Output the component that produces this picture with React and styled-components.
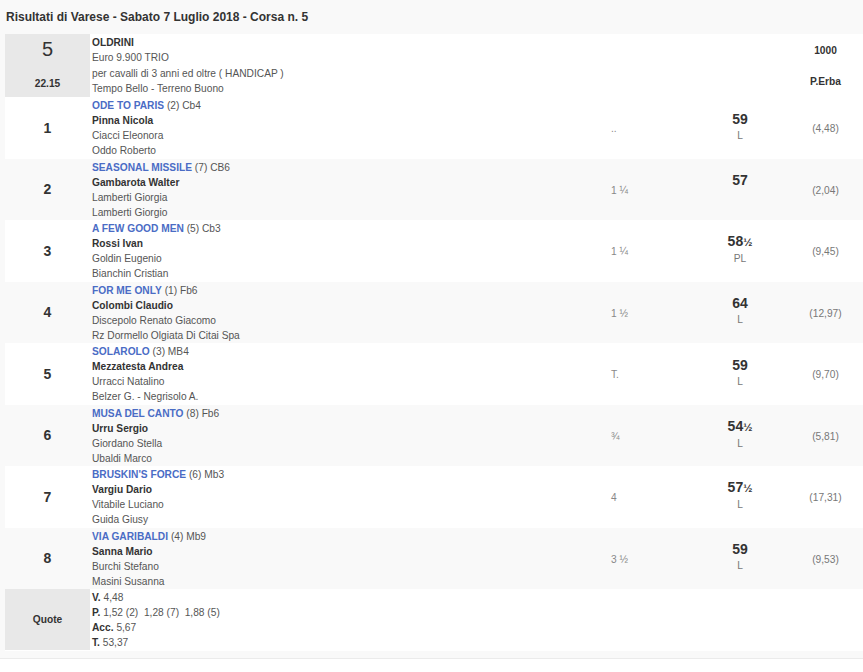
import React from 'react';
import styled, { createGlobalStyle } from 'styled-components';

const GlobalStyle = createGlobalStyle`
    body {
        margin: 0;
        background: #fff;
        font-family: 'Liberation Sans', Arial, sans-serif;
        color: #555;
    }
`;

const Page = styled.div`
    width: 863px;
`;

const Title = styled.h1`
    margin: 0;
    padding: 10px 6px 9px;
    font-size: 12px;
    line-height: 15px;
    font-weight: bold;
    color: #333;
    background: #f9f9f9;
`;

const Table = styled.div`
    background: #f9f9f9;
    padding: 0 0 0 5px;
    border-bottom: 1px solid #ebebeb;
`;

const Row = styled.div`
    display: grid;
    grid-template-columns: 85px 519px 91px 80px 1fr;
    background: ${p => (p.alt ? '#f9f9f9' : '#fff')};
    font-size: 10.2px;
    line-height: 15px;
`;

const NumCell = styled.div`
    background: ${p => (p.gray ? '#e8e8e8' : 'transparent')};
    display: flex;
    align-items: center;
    justify-content: center;
    font-weight: bold;
    font-size: 14px;
    color: #333;
    padding-top: 1px;
`;

const HeadNum = styled.div`
    background: #e8e8e8;
    display: flex;
    flex-direction: column;
    align-items: center;
    padding: 4px 0 6px;
    color: #333;
`;

const BigNum = styled.div`
    font-size: 20px;
    line-height: 22px;
`;

const Time = styled.div`
    margin-top: auto;
    font-size: 10.2px;
    font-weight: bold;
`;

const Info = styled.div`
    padding: 1px 0 0.5px 2px;
`;

const HeadInfo = styled(Info)`
    padding: 1px 0 1px 2px;
    line-height: 15.25px;
`;

const Line = styled.div`
    white-space: nowrap;
    font-weight: ${p => (p.bold ? 'bold' : 'normal')};
    color: ${p => (p.bold ? '#333' : '#555')};
`;

const Horse = styled.span`
    color: #4a6cc5;
    font-weight: bold;
    text-transform: uppercase;
`;

const Key = styled.b`
    color: #333;
`;

const Dist = styled.div`
    display: flex;
    align-items: center;
    padding: 2px 0 0 2px;
    color: #888;
`;

const Weight = styled.div`
    display: flex;
    flex-direction: column;
    align-items: center;
    justify-content: center;
    padding-bottom: 2px;
`;

const Kg = styled.div`
    font-size: 14px;
    line-height: 17px;
    font-weight: bold;
    color: #333;
`;

const Half = styled.span`
    font-size: 11px;
`;

const Tag = styled.div`
    font-size: 10.2px;
    line-height: 15px;
    color: #777;
`;

const Odds = styled.div`
    display: flex;
    align-items: center;
    justify-content: center;
    padding: 2px 0 0 8px;
    color: #777;
`;

const HeadRight = styled.div`
    grid-column: 5;
    display: flex;
    flex-direction: column;
    align-items: center;
    justify-content: space-between;
    padding: 9px 0 8px 8px;
    font-weight: bold;
    color: #333;
`;

const QuoteLabel = styled(NumCell)`
    font-size: 10.2px;
    padding-top: 0;
    margin-bottom: 1px;
`;

const Footer = styled.div`
    height: 7px;
`;

const results = [
    { pos: 1, horse: 'Ode to Paris', extra: '(2) Cb4', jockey: 'Pinna Nicola', trainer: 'Ciacci Eleonora', owner: 'Oddo Roberto', dist: '..', kg: '59', tag: 'L', odds: '(4,48)' },
    { pos: 2, horse: 'Seasonal Missile', extra: '(7) CB6', jockey: 'Gambarota Walter', trainer: 'Lamberti Giorgia', owner: 'Lamberti Giorgio', dist: '1 ¼', kg: '57', tag: '', odds: '(2,04)' },
    { pos: 3, horse: 'A Few Good Men', extra: '(5) Cb3', jockey: 'Rossi Ivan', trainer: 'Goldin Eugenio', owner: 'Bianchin Cristian', dist: '1 ¼', kg: '58', half: true, tag: 'PL', odds: '(9,45)' },
    { pos: 4, horse: 'For Me Only', extra: '(1) Fb6', jockey: 'Colombi Claudio', trainer: 'Discepolo Renato Giacomo', owner: 'Rz Dormello Olgiata Di Citai Spa', dist: '1 ½', kg: '64', tag: 'L', odds: '(12,97)' },
    { pos: 5, horse: 'Solarolo', extra: '(3) MB4', jockey: 'Mezzatesta Andrea', trainer: 'Urracci Natalino', owner: 'Belzer G. - Negrisolo A.', dist: 'T.', kg: '59', tag: 'L', odds: '(9,70)' },
    { pos: 6, horse: 'Musa del Canto', extra: '(8) Fb6', jockey: 'Urru Sergio', trainer: 'Giordano Stella', owner: 'Ubaldi Marco', dist: '¾', kg: '54', half: true, tag: 'L', odds: '(5,81)' },
    { pos: 7, horse: "Bruskin's Force", extra: '(6) Mb3', jockey: 'Vargiu Dario', trainer: 'Vitabile Luciano', owner: 'Guida Giusy', dist: '4', kg: '57', half: true, tag: 'L', odds: '(17,31)' },
    { pos: 8, horse: 'Via Garibaldi', extra: '(4) Mb9', jockey: 'Sanna Mario', trainer: 'Burchi Stefano', owner: 'Masini Susanna', dist: '3 ½', kg: '59', tag: 'L', odds: '(9,53)' },
];

const quotes = [
    ['V.', '4,48'],
    ['P.', '1,52 (2)\u00a0\u00a01,28 (7)\u00a0\u00a01,88 (5)'],
    ['Acc.', '5,67'],
    ['T.', '53,37'],
];

const App = () => (
    <Page>
        <GlobalStyle />
        <Title>Risultati di Varese - Sabato 7 Luglio 2018 - Corsa n. 5</Title>
        <Table>
            <Row>
                <HeadNum>
                    <BigNum>5</BigNum>
                    <Time>22.15</Time>
                </HeadNum>
                <HeadInfo>
                    <Line bold>OLDRINI</Line>
                    <Line>Euro 9.900 TRIO</Line>
                    <Line>per cavalli di 3 anni ed oltre ( HANDICAP )</Line>
                    <Line>Tempo Bello - Terreno Buono</Line>
                </HeadInfo>
                <HeadRight>
                    <div>1000</div>
                    <div>P.Erba</div>
                </HeadRight>
            </Row>
            {results.map((r, i) => (
                <Row key={ r.pos } alt={ i % 2 === 1 }>
                    <NumCell>{ r.pos }</NumCell>
                    <Info>
                        <Line><Horse>{ r.horse }</Horse> { r.extra }</Line>
                        <Line bold>{ r.jockey }</Line>
                        <Line>{ r.trainer }</Line>
                        <Line>{ r.owner }</Line>
                    </Info>
                    <Dist>{ r.dist }</Dist>
                    <Weight>
                        <Kg>{ r.kg }{ r.half && <Half>½</Half> }</Kg>
                        <Tag>{ r.tag || '\u00a0' }</Tag>
                    </Weight>
                    <Odds>{ r.odds }</Odds>
                </Row>
            ))}
            <Row>
                <QuoteLabel gray>Quote</QuoteLabel>
                <Info>
                    {quotes.map(([k, v]) => (
                        <Line key={ k }>
                            <Key>{ k }</Key> { v }
                        </Line>
                    ))}
                </Info>
            </Row>
            <Footer />
        </Table>
    </Page>
);

export default App;
